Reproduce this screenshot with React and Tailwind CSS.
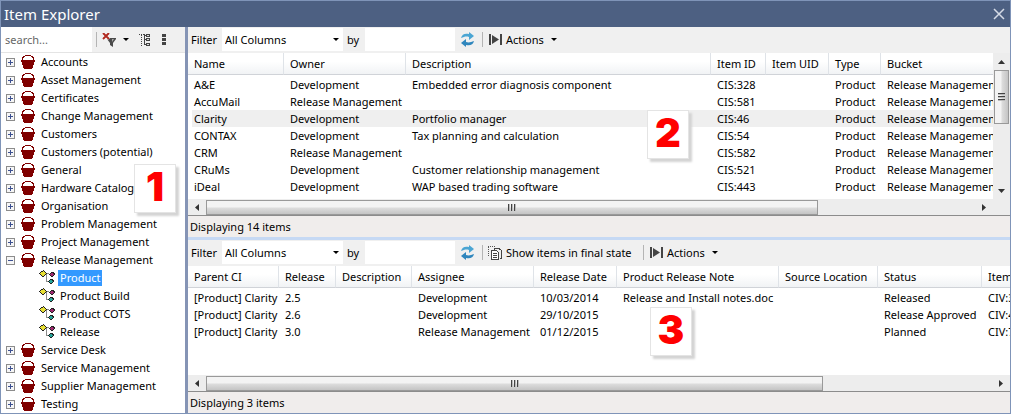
import React, { useState } from "react";
import clsx from "clsx";

const treeItems = [
  { name: "Accounts" },
  { name: "Asset Management" },
  { name: "Certificates" },
  { name: "Change Management" },
  { name: "Customers" },
  { name: "Customers (potential)" },
  { name: "General" },
  { name: "Hardware Catalogue" },
  { name: "Organisation" },
  { name: "Problem Management" },
  { name: "Project Management" },
  {
    name: "Release Management",
    children: ["Product", "Product Build", "Product COTS", "Release"],
  },
  { name: "Service Desk" },
  { name: "Service Management" },
  { name: "Supplier Management" },
  { name: "Testing" },
];

const itemColumns = [
  { label: "Name", width: "w-[96px]" },
  { label: "Owner", width: "w-[122px]" },
  { label: "Description", width: "w-[305px]" },
  { label: "Item ID", width: "w-[55px]" },
  { label: "Item UID", width: "w-[63px]" },
  { label: "Type", width: "w-[52px]" },
  { label: "Bucket", width: "w-[130px]" },
];

const items = [
  ["A&E", "Development", "Embedded error diagnosis component", "CIS:328", "", "Product", "Release Management"],
  ["AccuMail", "Release Management", "", "CIS:581", "", "Product", "Release Management"],
  ["Clarity", "Development", "Portfolio manager", "CIS:46", "", "Product", "Release Management"],
  ["CONTAX", "Development", "Tax planning and calculation", "CIS:54", "", "Product", "Release Management"],
  ["CRM", "Release Management", "", "CIS:582", "", "Product", "Release Management"],
  ["CRuMs", "Development", "Customer relationship management", "CIS:521", "", "Product", "Release Management"],
  ["iDeal", "Development", "WAP based trading software", "CIS:443", "", "Product", "Release Management"],
];

const releaseColumns = [
  { label: "Parent CI", width: "w-[91px]" },
  { label: "Release", width: "w-[57px]" },
  { label: "Description", width: "w-[76px]" },
  { label: "Assignee", width: "w-[122px]" },
  { label: "Release Date", width: "w-[83px]" },
  { label: "Product Release Note", width: "w-[162px]" },
  { label: "Source Location", width: "w-[99px]" },
  { label: "Status", width: "w-[104px]" },
  { label: "Item ID", width: "w-[60px]" },
];

const releases = [
  ["[Product] Clarity", "2.5", "", "Development", "10/03/2014", "Release and Install notes.doc", "", "Released", "CIV:318"],
  ["[Product] Clarity", "2.6", "", "Development", "29/10/2015", "", "", "Release Approved", "CIV:440"],
  ["[Product] Clarity", "3.0", "", "Release Management", "01/12/2015", "", "", "Planned", "CIV:712"],
];

function BucketIcon() {
  return (
    <svg width="14" height="14" viewBox="0 0 14 14" className="shrink-0" shapeRendering="crispEdges">
      <path d="M4 0h6v1h2v1h1v3H1V2h1V1h2z" fill="#800000" />
      <path d="M4 1h6v1h1v1h1v2H2V3h1V2h1z" fill="#fff" />
      <path d="M0 5h14v2h-1v3h-1v3h-1v1H3v-1H2v-3H1V7H0z" fill="#800000" />
    </svg>
  );
}

function ItemTypeIcon() {
  return (
    <svg width="16" height="16" viewBox="0 0 16 16" className="shrink-0" shapeRendering="crispEdges">
      <path d="M7 3.500h3M7.500 4v8M7 11.500h2" stroke="#8a8a8a" fill="none" />
      <path d="M4 0h1v1h1v1h1v1h1v1H7v1H6v1H5v1H3V6H2V5H1V4H0V3h1V2h1V1h2z" fill="#222" />
      <path d="M4 1h1v1h1v1h1v1H6v1H5v1H3V5H2V4H1V3h1V2h2z" fill="#e8e034" />
      <path d="M12 2h3v1h1v2h-1v1h-1v1h-2V6h-1V5h-1V4h1V3h1z" fill="#222" />
      <path d="M12 3h2v1h1v1h-1v1h-2V5h-1V4h1z" fill="#a02870" />
      <path d="M11 9h3v1h1v2h-1v1h-1v1h-2v-1h-1v-1H9v-1h1v-1h1z" fill="#222" />
      <path d="M11 10h2v1h1v1h-1v1h-2v-1h-1v-1h1z" fill="#25a59a" />
    </svg>
  );
}

function ClearFilterIcon() {
  return (
    <svg width="14" height="14" viewBox="0 0 14 14">
      <path d="M5 5h9v1l-3 4v4l-3-2v-2L5 6z" fill="#4a4a4a" />
      <path d="M10 6l2 0-2 3z" fill="#aaa" />
      <path d="M1 0l6 6M7 0L1 6" stroke="#fff" strokeWidth="3" />
      <path d="M1 0l6 6M7 0L1 6" stroke="#b02a20" strokeWidth="2" />
    </svg>
  );
}

function TreeIcon() {
  return (
    <svg width="11" height="12" viewBox="0 0 11 12" shapeRendering="crispEdges">
      <path d="M0 .5h5" stroke="#444" strokeDasharray="1 1" />
      <path d="M2.500 1v11" stroke="#444" strokeDasharray="1 1" />
      <path d="M5.500 0v11M5 5.500h2M5 10.500h2M5 1.500h2" stroke="#444" fill="none" />
      <path d="M7 0h4v3H7zM7 4h4v3H7zM7 9h4v3H7z" fill="#444" />
      <path d="M8 1h2v1H8zM8 5h2v1H8zM8 10h2v1H8z" fill="#ddd" />
    </svg>
  );
}

function DotsIcon() {
  return (
    <svg width="4" height="12" viewBox="0 0 4 12" shapeRendering="crispEdges">
      <path d="M0 0h4v3H0zM0 4h4v3H0zM0 8h4v3H0z" fill="#444" />
    </svg>
  );
}

function RefreshIcon() {
  return (
    <svg width="13" height="15" viewBox="0 0 13 15">
      <path d="M0 6C1 2 4 1 8 2V0l5 4-5 4V5C5 4 3 5 0 6z" fill="#4aa5d3" />
      <path d="M13 9c-1 4-4 5-8 4v2l-5-4 5-4v3c3 1 5 0 8-1z" fill="#2f86bd" />
    </svg>
  );
}

function ActionsIcon() {
  return (
    <svg width="14" height="11" viewBox="0 0 14 11">
      <path d="M0 0h2v11H0zM11 0h2v11h-2z" fill="#444" />
      <path d="M3 1l7 4.500L3 10z" fill="#444" />
    </svg>
  );
}

function FinalStateIcon() {
  return (
    <svg width="14" height="14" viewBox="0 0 14 14" shapeRendering="crispEdges">
      <path d="M0 .5h7M.5 1v9" stroke="#555" strokeDasharray="1 1" fill="none" />
      <path d="M6 3.500V2.500h5l2.500 2V12h-2" stroke="#444" fill="none" />
      <path d="M3.500 4.500h5l2 2v7h-7z" stroke="#444" fill="#fff" />
      <path d="M5 7.500h4M5 9.500h4M5 11.500h4" stroke="#444" />
    </svg>
  );
}

function Caret() {
  return (
    <svg width="6" height="3" viewBox="0 0 6 3" className="shrink-0">
      <path d="M0 0h6L3 3z" fill="#000" />
    </svg>
  );
}

function Separator() {
  return <div className="h-[15px] w-px shrink-0 bg-[#b4b4b4]" />;
}

function Badge({ children, className }) {
  return (
    <div
      className={clsx(
        "absolute z-10 flex h-[49px] w-[42px] items-center justify-center border border-[#e4e4e4] bg-white pb-1 font-[Inter,sans-serif] text-[40px] leading-none font-black text-[#ff0000] shadow-[3px_3px_2px_#d4d4d4]",
        className
      )}
    >
      {children}
    </div>
  );
}

function Toggle({ name, open, onClick }) {
  return (
    <button
      aria-label={(open ? "Collapse " : "Expand ") + name}
      aria-expanded={open}
      onClick={onClick}
      className="mr-1.5 h-[9px] w-[9px] shrink-0"
    >
      <svg width="9" height="9" viewBox="0 0 9 9" shapeRendering="crispEdges" className="block">
        <path d="M.5 .5h8v8h-8z" fill="#f6f6f6" stroke="#8c8c8c" />
        <path d={open ? "M2 4.500h5" : "M2 4.500h5M4.500 2v5"} stroke="#3c5090" />
      </svg>
    </button>
  );
}

function Tree() {
  const [closed, setClosed] = useState([]);
  const [selected, setSelected] = useState("Product");

  const toggle = (name) => {
    setClosed((c) => (c.includes(name) ? c.filter((n) => n !== name) : [...c, name]));
  };

  return (
    <ul>
      {treeItems.map((item) => {
        const open = Boolean(item.children) && !closed.includes(item.name);
        return (
          <li key={item.name}>
            <div className="flex h-[18px] items-center pl-[5px]">
              <Toggle name={item.name} open={open} onClick={() => toggle(item.name)} />
              <BucketIcon />
              <span className="ml-1 px-0.5 whitespace-nowrap">{item.name}</span>
            </div>
            {open && (
              <ul>
                {item.children.map((child) => (
                  <li key={child} className="flex h-[18px] items-center pl-[38px]">
                    <ItemTypeIcon />
                    <button
                      onClick={() => setSelected(child)}
                      className={clsx(
                        "ml-[3px] h-4 px-0.5",
                        selected === child && "bg-[#3399ff] text-white"
                      )}
                    >
                      {child}
                    </button>
                  </li>
                ))}
              </ul>
            )}
          </li>
        );
      })}
    </ul>
  );
}

function Toolbar({ id, showFinal }) {
  return (
    <div className="flex h-[26px] shrink-0 items-center bg-[#f0f0f0] pb-px pl-[3px]">
      <label htmlFor={id + "-column"} className="w-[31px]">
        Filter
      </label>
      <div className="relative flex items-center">
        <select
          id={id + "-column"}
          className="h-[23px] w-[121px] appearance-none bg-white pl-[3px] outline-none"
        >
          <option>All Columns</option>
        </select>
        <span className="pointer-events-none absolute right-1">
          <Caret />
        </span>
      </div>
      <label htmlFor={id + "-by"} className="w-[22px] pl-1">
        by
      </label>
      <input id={id + "-by"} type="text" className="h-[23px] w-[90px] bg-white px-1 outline-none" />
      <button aria-label="Refresh" className="mr-2 ml-1.5">
        <RefreshIcon />
      </button>
      <Separator />
      {showFinal && (
        <>
          <button className="mr-[9px] ml-[5px] flex items-center gap-1 whitespace-nowrap">
            <FinalStateIcon />
            <span className="min-w-[128px] text-left">Show items in final state</span>
          </button>
          <Separator />
        </>
      )}
      <button className="ml-1.5 flex items-center gap-[3px]">
        <ActionsIcon />
        Actions
        <span className="ml-1">
          <Caret />
        </span>
      </button>
    </div>
  );
}

function DataTable({ columns, rows, selected }) {
  return (
    <table className="w-full table-fixed border-separate border-spacing-0 text-left whitespace-nowrap">
      <thead>
        <tr>
          {columns.map((col) => (
            <th
              key={col.label}
              className={clsx(
                "h-[22px] border-r border-b border-r-[#dfe3e8] border-b-[#d0d3d8] bg-linear-to-b from-white from-40% to-[#f1f3f5] p-0 pl-1.5 font-normal",
                col.width
              )}
            >
              {col.label}
            </th>
          ))}
        </tr>
      </thead>
      <tbody>
        <tr className="h-px" aria-hidden="true" />
        {rows.map((row, i) => (
          <tr key={i}>
            {row.map((cell, j) => (
              <td
                key={j}
                className={clsx(
                  "h-[17px] p-0",
                  j === 0 ? "border-l-4 border-white pl-0.5" : "pl-1.5",
                  i === selected && "bg-[#efefef]"
                )}
              >
                {cell}
              </td>
            ))}
          </tr>
        ))}
      </tbody>
    </table>
  );
}

function HorizontalScroll({ ratio }) {
  return (
    <div className="flex h-4 shrink-0 items-center bg-[#ededed]">
      <button aria-label="Scroll left" className="flex w-[18px] shrink-0 justify-center">
        <svg width="4" height="7" viewBox="0 0 4 7">
          <path d="M4 0v7L0 3.500z" fill="#333" />
        </svg>
      </button>
      <div className="h-[15px] flex-1">
        <div
          className="flex h-full items-center justify-center gap-px border border-[#999] bg-linear-to-b from-[#f3f3f3] from-45% via-[#dcdcdc] via-55% to-[#c4c4c4]"
          style={{ width: `${ratio * 100}%` }}
        >
          <span className="h-[7px] w-0.5 border-l border-[#444] bg-[#bbb]" />
          <span className="h-[7px] w-0.5 border-l border-[#444] bg-[#bbb]" />
          <span className="h-[7px] w-0.5 border-l border-[#444] bg-[#bbb]" />
        </div>
      </div>
      <button aria-label="Scroll right" className="flex w-[18px] shrink-0 justify-center">
        <svg width="4" height="7" viewBox="0 0 4 7">
          <path d="M0 0v7l4-3.500z" fill="#333" />
        </svg>
      </button>
    </div>
  );
}

function VerticalScroll() {
  return (
    <div className="flex w-[17px] shrink-0 flex-col items-center bg-[#ededed]">
      <button aria-label="Scroll up" className="flex h-[17px] items-center">
        <svg width="7" height="4" viewBox="0 0 7 4">
          <path d="M0 4h7L3.500 0z" fill="#333" />
        </svg>
      </button>
      <div className="w-[15px] flex-1">
        <div className="flex h-[54px] flex-col items-center justify-center gap-px border border-[#999] bg-linear-to-r from-[#f3f3f3] from-45% via-[#dcdcdc] via-55% to-[#c4c4c4]">
          <span className="h-0.5 w-[7px] border-t border-[#444] bg-[#bbb]" />
          <span className="h-0.5 w-[7px] border-t border-[#444] bg-[#bbb]" />
          <span className="h-0.5 w-[7px] border-t border-[#444] bg-[#bbb]" />
        </div>
      </div>
      <button aria-label="Scroll down" className="flex h-[17px] items-center">
        <svg width="7" height="4" viewBox="0 0 7 4">
          <path d="M0 0h7L3.500 4z" fill="#333" />
        </svg>
      </button>
    </div>
  );
}

function StatusBar({ children }) {
  return (
    <div className="flex h-[22px] shrink-0 items-center border-t border-[#8c8c8c] bg-[#f0edec] pl-0.5">
      {children}
    </div>
  );
}

function App() {
  return (
    <div className="flex min-h-screen w-full flex-col border border-[#7f94b8] bg-white font-['Noto_Sans',sans-serif] text-[11px] leading-4 text-black">
      <header className="flex h-[26px] shrink-0 items-center justify-between bg-[#4d6082] pr-[5px] pl-[3px] text-white">
        <h1 className="text-[15px]">Item Explorer</h1>
        <button aria-label="Close">
          <svg width="12" height="12" viewBox="0 0 12 12">
            <path d="M1 1l10 10M11 1L1 11" stroke="#d5dbe6" strokeWidth="1.500" />
          </svg>
        </button>
      </header>

      <div className="flex flex-1">
        <aside className="relative w-[184px] shrink-0">
          <div className="flex h-[26px] items-center border-b border-[#e4e4e4] bg-[#f0f0f0]">
            <input
              type="text"
              aria-label="Search"
              placeholder="search..."
              className="h-full w-[91px] bg-white pl-1 outline-none placeholder:text-[#666]"
            />
            <div className="ml-1 flex items-center">
              <Separator />
              <button aria-label="Clear filter" className="ml-[5px] flex items-center gap-[7px]">
                <ClearFilterIcon />
                <Caret />
              </button>
              <button aria-label="Tree view" className="ml-2.5">
                <TreeIcon />
              </button>
              <button aria-label="More" className="ml-3">
                <DotsIcon />
              </button>
            </div>
          </div>
          <Tree />
          <Badge className="top-[137px] left-[133px]">1</Badge>
        </aside>

        <main className="flex min-w-0 flex-1 flex-col border-l-[3px] border-[#8594b5]">
          <section className="relative">
            <Toolbar id="items" />
            <div className="flex">
              <div className="min-w-0 flex-1">
                <div className="overflow-hidden pb-1">
                  <DataTable columns={itemColumns} rows={items} selected={2} />
                </div>
              </div>
              <VerticalScroll />
            </div>
            <div className="bg-[#ededed] pr-[17px]">
              <HorizontalScroll ratio={612 / 769} />
            </div>
            <StatusBar>Displaying 14 items</StatusBar>
            <Badge className="top-[83px] left-[459px]">2</Badge>
          </section>

          <div className="h-[3px] shrink-0 bg-[#c6d9f4]" />

          <section className="relative flex flex-1 flex-col">
            <Toolbar id="releases" showFinal />
            <div className="flex-1 overflow-hidden">
              <DataTable columns={releaseColumns} rows={releases} />
            </div>
            <HorizontalScroll ratio={617 / 786} />
            <StatusBar>Displaying 3 items</StatusBar>
            <Badge className="top-[67px] left-[462px]">3</Badge>
          </section>
        </main>
      </div>
    </div>
  );
}

export default App;
